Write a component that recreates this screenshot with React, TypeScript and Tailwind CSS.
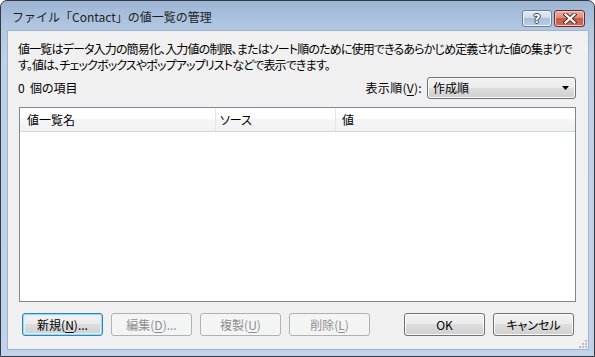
import type { ReactNode } from 'react';

const JP = "font-['Noto_Sans_CJK_JP','Noto_Sans',sans-serif]";

function Mn({ k }: { k: string }) {
  return <span className="underline underline-offset-2">{k}</span>;
}

function Btn({ children, primary, disabled }: { children: ReactNode; primary?: boolean; disabled?: boolean }) {
  if (disabled) {
    return (
      <div className="w-[81px] h-[23px] rounded-[3px] border border-[#adb2b5] bg-[#f4f4f4] text-[#8f8f8f] flex items-center justify-center">
        {children}
      </div>
    );
  }
  return (
    <div
      className={
        'w-[81px] h-[23px] rounded-[3px] border flex items-center justify-center text-black bg-[linear-gradient(#f2f2f2,#ebebeb_50%,#dddddd_50%,#cfcfcf)] ' +
        (primary
          ? 'border-[#3c7fb1] shadow-[inset_0_0_0_1px_#8fdcf8,inset_0_0_0_2px_#d9f2fc]'
          : 'border-[#707070] shadow-[inset_0_0_0_1px_#fbfbfb]')
      }
    >
      {children}
    </div>
  );
}

function App() {
  return (
    <div className={`w-[595px] h-[357px] ${JP} text-[12px] leading-none text-black`}>
      <div className="w-full h-full flex flex-col border border-[#363a40] rounded-t-[7px] bg-[linear-gradient(#9db6d5,#b3c9e3_30px,#bdd2ea_60px,#bfd4ec)] pl-[6px] pr-[5px] pb-[6px]">
        {/* title bar */}
        <div className="h-[29px] flex items-start pl-[5px] pr-[4px] shrink-0">
          <div className="mt-[10px] text-[#1e1e1e]">ファイル「Contact」の値一覧の管理</div>
          <div className="ml-auto mt-[9px] flex gap-[2px]">
            <div className="w-[30px] h-[17px] rounded-[3px] border border-[#6a7f9c] bg-[linear-gradient(#e3ecf6,#c8d8eb_50%,#a9c0dc_50%,#b9cee6)] shadow-[inset_0_0_0_1px_#eef4fb] flex items-center justify-center">
              <span className="font-['DejaVu_Sans',sans-serif] font-bold text-[12px] text-white [text-shadow:0_0_1px_#2f3d52,1px_0_0_#3d4d66,-1px_0_0_#3d4d66,0_1px_0_#3d4d66,0_-1px_0_#3d4d66]">?</span>
            </div>
            <div className="w-[31px] h-[17px] rounded-[3px] border border-[#6b2a25] bg-[linear-gradient(#eab1a6,#d98a7b_45%,#c75a48_50%,#d06a55)] shadow-[inset_0_0_0_1px_#f3c7bd] flex items-center justify-center">
              <svg width="14" height="11" viewBox="0 0 14 11">
                <path d="M2.5 1.5 L11.5 9.5 M11.5 1.5 L2.5 9.5" stroke="#4a2a2a" strokeWidth="4" strokeLinecap="square" />
                <path d="M2.5 1.5 L11.5 9.5 M11.5 1.5 L2.5 9.5" stroke="#ffffff" strokeWidth="2.2" strokeLinecap="square" />
              </svg>
            </div>
          </div>
        </div>

        {/* client area */}
        <div className="flex-1 flex flex-col bg-[#f0f0f0] border border-[#9fb3cb] pl-[10px] pr-[12px] pt-[10px] [font-feature-settings:'palt']">
          <div className="leading-[16px] whitespace-nowrap tracking-[-0.85px]">
            値一覧はデータ入力の簡易化、入力値の制限、またはソート順のために使用できるあらかじめ定義された値の集まりで
            <br />
            す。値は、チェックボックスやポップアップリストなどで表示できます。
          </div>

          <div className="mt-[3px] h-[23px] flex items-center">
            <span>0&nbsp;&nbsp;個の項目</span>
            <span className="ml-auto mr-[5px] tracking-[0.3px]">
              表示順(<Mn k="V" />):
            </span>
            <div className="w-[149px] h-[22px] rounded-[3px] border border-[#707070] bg-[linear-gradient(#f2f2f2,#ebebeb_50%,#dddddd_50%,#cfcfcf)] shadow-[inset_0_0_0_1px_#fbfbfb] flex items-center pl-[5px] pr-[6px]">
              <span>作成順</span>
              <svg className="ml-auto" width="7" height="4" viewBox="0 0 7 4">
                <path d="M0 0 H7 L3.5 4 Z" fill="#000" />
              </svg>
            </div>
          </div>

          <div className="mt-[8px] ml-[1px] h-[195px] border border-[#828790] bg-white flex flex-col">
            <div className="h-[24px] flex border-b border-[#d5d5d5] bg-[linear-gradient(#ffffff,#ffffff_45%,#f4f5f6_50%,#f1f2f4)]">
              <div className="w-[196px] pl-[7px] flex items-center border-r border-[#e3e6ea]">値一覧名</div>
              <div className="w-[120px] pl-[4px] flex items-center border-r border-[#e3e6ea]">ソース</div>
              <div className="flex-1 pl-[6px] flex items-center">値</div>
            </div>
          </div>

          <div className="mt-[11px] flex items-center relative">
            <div className="ml-[4px] flex gap-[8px]">
              <Btn primary>
                新規(<Mn k="N" />)...
              </Btn>
              <Btn disabled>
                編集(<Mn k="D" />)...
              </Btn>
              <Btn disabled>
                複製(<Mn k="U" />)
              </Btn>
              <Btn disabled>
                削除(<Mn k="L" />)
              </Btn>
            </div>
            <div className="ml-auto flex gap-[8px] mr-[2px]">
              <Btn>OK</Btn>
              <Btn>キャンセル</Btn>
            </div>
            <svg className="absolute -right-[11px] top-[27px]" width="8" height="8" viewBox="0 0 8 8">
              {[
                [6, 0],
                [6, 3],
                [3, 3],
                [6, 6],
                [3, 6],
                [0, 6],
              ].map(([x, y], i) => (
                <rect key={i} x={x} y={y} width="2" height="2" fill="#b9bcc0" />
              ))}
            </svg>
          </div>
        </div>
      </div>
    </div>
  );
}

export default App;
